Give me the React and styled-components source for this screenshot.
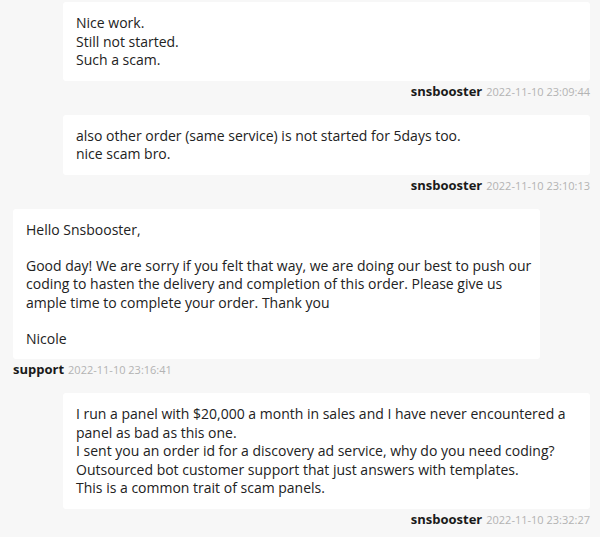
import React from 'react';
import styled, { createGlobalStyle } from 'styled-components';

const GlobalStyle = createGlobalStyle`
    body {
        margin: 0;
        background: #f7f7f7;
        font-family: "Open Sans", "Liberation Sans", sans-serif;
        color: #222;
    }
`

const messages = [
    {
        side: 'right',
        user: 'snsbooster',
        date: '2022-11-10 23:09:44',
        lines: ['Nice work.', 'Still not started.', 'Such a scam.'],
    },
    {
        side: 'right',
        user: 'snsbooster',
        date: '2022-11-10 23:10:13',
        lines: ['also other order (same service) is not started for 5days too.', 'nice scam bro.'],
    },
    {
        side: 'left',
        user: 'support',
        date: '2022-11-10 23:16:41',
        lines: [
            'Hello Snsbooster,',
            '',
            'Good day! We are sorry if you felt that way, we are doing our best to push our coding to hasten the delivery and completion of this order. Please give us ample time to complete your order. Thank you',
            '',
            'Nicole',
        ],
    },
    {
        side: 'right',
        user: 'snsbooster',
        date: '2022-11-10 23:32:27',
        lines: [
            'I run a panel with $20,000 a month in sales and I have never encountered a panel as bad as this one.',
            'I sent you an order id for a discovery ad service, why do you need coding?',
            'Outsourced bot customer support that just answers with templates.',
            'This is a common trait of scam panels.',
        ],
    },
]

const App = () => {
    return (
        <>
            <GlobalStyle />
            <Thread>
                {messages.map((m, i) => (
                    <Message key={i} side={m.side}>
                        <Bubble>
                            {m.lines.map((l, j) => (
                                l ? <Line key={j}>{l}</Line> : <Gap key={j} />
                            ))}
                        </Bubble>
                        <Meta side={m.side}>
                            <User>{m.user}</User>
                            <Stamp>{m.date}</Stamp>
                        </Meta>
                    </Message>
                ))}
            </Thread>
        </>
    )
}

export default App


const Thread = styled.div`
    display: flex;
    flex-direction: column;
    padding: 2px 10px 0 13px;
`

const Message = styled.div`
    display: flex;
    flex-direction: column;
    align-items: ${props => props.side === 'right' ? 'flex-end' : 'flex-start'};
    margin-bottom: 16px;
`

const Bubble = styled.div`
    width: 527px;
    box-sizing: border-box;
    background: #fff;
    border-radius: 3px;
    padding: 12px 5px 11px 13px;
    font-size: 14px;
    line-height: 18.5px;
    color: #222;
`

const Line = styled.div``

const Gap = styled.div`
    height: 17.5px;
`

const Meta = styled.div`
    display: flex;
    align-items: baseline;
    gap: 4px;
    height: 16px;
    line-height: 16px;
    margin-top: 2px;
    white-space: nowrap;
`

const User = styled.span`
    font-weight: 700;
    font-size: 13px;
    color: #1a1a1a;
`

const Stamp = styled.span`
    font-size: 11px;
    color: #b3b3b3;
`
